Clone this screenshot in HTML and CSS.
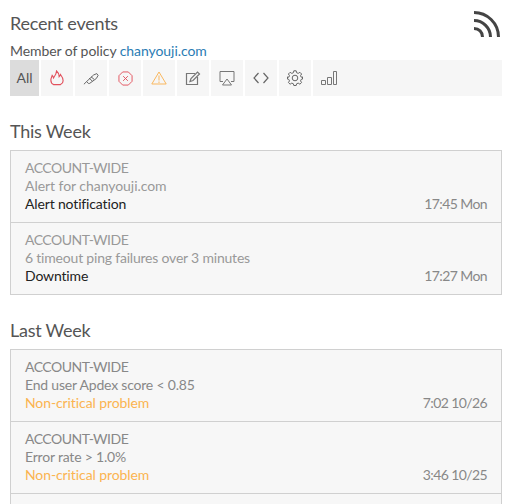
FILE: index.html
```html
<!DOCTYPE html>
<html lang="en">
<head>
    <meta charset="UTF-8">
    <title>Recent events</title>
    <link rel="stylesheet" href="styles.css">
</head>
<body>
    <div class="header">
        <h2>Recent events</h2>
        <svg class="rss" width="28" height="28" viewBox="0 0 28 28" fill="none" stroke="#444" stroke-width="3">
            <path d="M1 2.500C14 2.500 25.500 13 25.500 27"/>
            <path d="M1 10.500C10 10.500 17.500 18 17.500 27"/>
            <path d="M1 18.500C6 18.500 9.500 22 9.500 27"/>
        </svg>
    </div>
    <p class="policy">Member of policy <a href="#">chanyouji.com</a></p>

    <div class="filters">
        <a class="filter all" href="#">All</a>
        <a class="filter" href="#">
            <svg width="14" height="16" viewBox="0 0 16 18" fill="none" stroke="#e2505c" stroke-width="1.300">
                <path d="M4 16.500C2 15.500 1 13.500 1 11.500C1 9.500 2 7.500 2.500 6C3.500 7 3.800 8 4 9C5.500 7 7.500 4 7.500 1C10 3 10.500 5.500 10.500 7.500C11 7 11.500 6.500 12 5C13.500 7 15 9.500 15 12C15 14 14 15.500 12 16.500Z"/>
            </svg>
        </a>
        <a class="filter" href="#">
            <svg width="16" height="13" viewBox="0 0 18 14" fill="none" stroke="#555" stroke-width="1">
                <path d="M6 12.500L4 10.500L12 3L15.500 1.500L17 3.500L15 7L7.500 12.500Z"/>
                <path d="M7 6.500L10.500 10M9 5L12.500 8M1 13.500L4 10.500"/>
            </svg>
        </a>
        <a class="filter" href="#">
            <svg width="15" height="15" viewBox="0 0 16 16" fill="none" stroke="#e2505c" stroke-width="1">
                <path d="M5 1H11L15 5V11L11 15H5L1 11V5Z"/>
                <path d="M5.500 5.500L10.500 10.500M10.500 5.500L5.500 10.500"/>
            </svg>
        </a>
        <a class="filter" href="#">
            <svg width="16" height="14" viewBox="0 0 16 14" fill="none" stroke="#f9b75e" stroke-width="1">
                <path d="M8 1L15.200 13H.800Z"/>
                <path d="M8 4.500V9.500M8 10.500V12"/>
            </svg>
        </a>
        <a class="filter" href="#">
            <svg width="16" height="16" viewBox="0 0 16 16" fill="none" stroke="#777" stroke-width="1.200">
                <path d="M10 3.500H1.500V14.500H12.500V7"/>
                <path d="M5 11.500L6 8.500L12.500 2L14.500 4L8 10.500Z"/>
            </svg>
        </a>
        <a class="filter" href="#">
            <svg width="16" height="15" viewBox="0 0 16 15" fill="none" stroke="#777" stroke-width="1">
                <path d="M4 10.500H1V.500H15V10.500H12"/>
                <path d="M8 8L12.500 14H3.500Z"/>
            </svg>
        </a>
        <a class="filter" href="#">
            <svg width="16" height="12" viewBox="0 0 16 12" fill="none" stroke="#666" stroke-width="1.200">
                <path d="M5.500 1L1 6L5.500 11M10.500 1L15 6L10.500 11"/>
            </svg>
        </a>
        <a class="filter" href="#">
            <svg width="16" height="16" viewBox="0 0 16 16" fill="none" stroke="#666" stroke-width="1">
                <circle cx="8" cy="8" r="2.800"/>
                <path d="M6.800 .800H9.200L9.600 2.700L11.200 3.400L12.900 2.300L14.600 4L13.500 5.700L14.200 7.200L15.500 6.900V9.100L14.200 9.400L13.500 10.900L14.600 12.500L12.900 14.200L11.200 13.100L9.600 13.800L9.200 15.500H6.800L6.400 13.800L4.800 13.100L3.100 14.200L1.400 12.500L2.500 10.900L1.800 9.400L.500 9.100V6.900L1.800 7.200L2.500 5.700L1.400 4L3.100 2.300L4.800 3.400L6.400 2.700Z"/>
            </svg>
        </a>
        <a class="filter last" href="#">
            <svg width="16" height="14" viewBox="0 0 16 14" fill="none" stroke="#777" stroke-width="1">
                <path d="M.500 9.500H4.500V13.500H.500ZM6.500 6.500H10.500V13.500H6.500ZM12.500 .500H15.500V13.500H12.500Z"/>
            </svg>
        </a>
    </div>

    <h3>This Week</h3>
    <div class="events">
        <div class="event">
            <div class="scope">ACCOUNT-WIDE</div>
            <div class="title plain">Alert for chanyouji.com</div>
            <div class="bottom"><span class="kind">Alert notification</span><span class="time">17:45 Mon</span></div>
        </div>
        <div class="event">
            <div class="scope">ACCOUNT-WIDE</div>
            <div class="title">6 timeout ping failures over 3 minutes</div>
            <div class="bottom"><span class="kind">Downtime</span><span class="time">17:27 Mon</span></div>
        </div>
    </div>

    <h3 class="last-week">Last Week</h3>
    <div class="events cut">
        <div class="event">
            <div class="scope">ACCOUNT-WIDE</div>
            <div class="title dark">End user Apdex score &lt; 0.85</div>
            <div class="bottom"><span class="kind warn">Non-critical problem</span><span class="time">7:02 10/26</span></div>
        </div>
        <div class="event">
            <div class="scope">ACCOUNT-WIDE</div>
            <div class="title dark">Error rate &gt; 1.0%</div>
            <div class="bottom"><span class="kind warn">Non-critical problem</span><span class="time">3:46 10/25</span></div>
        </div>
        <div class="event stub"></div>
    </div>
</body>
</html>
```

FILE: styles.css
```css
html, body {
    height: 504px;
    overflow: hidden;
}
body {
    margin: 0;
    padding: 10px 12px 0 10px;
    box-sizing: border-box;
    font-family: Lato, "Open Sans", sans-serif;
    font-size: 14px;
    line-height: 18px;
    color: #555;
    background-color: #fff;
}
.header {
    display: flex;
    justify-content: space-between;
    height: 32px;
}
.header h2 {
    margin: 0;
    font-size: 18px;
    font-weight: 400;
    line-height: 26px;
    letter-spacing: -0.25px;
}
.rss {
    margin-right: 1px;
}
.policy {
    margin: 0;
    height: 18px;
    letter-spacing: -0.07px;
}
.policy a {
    color: #2a7cb4;
    text-decoration: none;
}
.filters {
    display: flex;
    gap: 2px;
    height: 36px;
}
.filter {
    display: flex;
    align-items: center;
    justify-content: center;
    width: 32px;
    background-color: #f6f6f6;
    color: #555;
    text-decoration: none;
}
.filter.all {
    width: 29px;
    background-color: #dcdcdc;
}
.filter.last {
    flex: 1;
    justify-content: flex-start;
    padding-left: 8px;
}
h3 {
    margin: 24px 0 8px;
    font-size: 18px;
    font-weight: 400;
    line-height: 22px;
    letter-spacing: -0.25px;
}
h3.last-week {
    margin-top: 24px;
}
.events {
    border: 1px solid #d0d0d0;
    background-color: #f7f7f7;
}
.events.cut {
    border-bottom: 0;
}
.event {
    height: 72px;
    padding: 8px 14px 0;
    box-sizing: border-box;
    border-top: 1px solid #d0d0d0;
}
.event:first-child {
    border-top: 0;
    height: 71px;
}
.event.stub {
    height: 11px;
    padding: 0;
}
.scope, .title {
    color: #999;
}
.scope {
    letter-spacing: -0.5px;
}
.title {
    letter-spacing: -0.2px;
}
.title.plain {
    letter-spacing: -0.05px;
}
.title.dark, .cut .scope {
    color: #888;
}
.bottom {
    display: flex;
    justify-content: space-between;
}
.kind {
    color: #222;
    letter-spacing: -0.15px;
}
.kind.warn {
    color: #fbb450;
    letter-spacing: -0.1px;
}
.time {
    color: #888;
    letter-spacing: -0.6px;
}
```
